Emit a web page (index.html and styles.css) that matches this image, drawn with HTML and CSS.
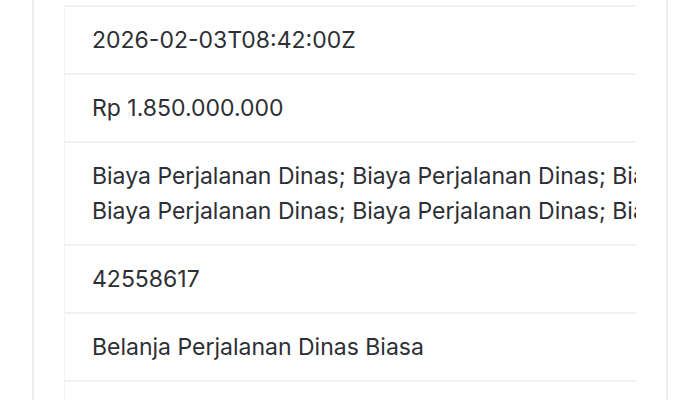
FILE: index.html
```html
<!DOCTYPE html>
<html lang="en">
<head>
  <meta charset="UTF-8" />
  <meta name="viewport" content="width=device-width, initial-scale=1.0"/>
  <title>Detail Transaksi</title>
  <link rel="stylesheet" href="styles.css">
</head>
<body>
  <div class="card">
    <div class="table-wrap">
      <table class="detail">
        <tr><td>2026-02-03T08:42:00Z</td></tr>
        <tr><td>Rp 1.850.000.000</td></tr>
        <tr><td>Biaya Perjalanan Dinas; Biaya Perjalanan Dinas; Biaya Perjalanan Dinas; Biaya Perjalanan Dinas;<br>Biaya Perjalanan Dinas; Biaya Perjalanan Dinas; Biaya Perjalanan Dinas; Biaya Perjalanan Dinas</td></tr>
        <tr><td>42558617</td></tr>
        <tr><td>Belanja Perjalanan Dinas Biasa</td></tr>
        <tr><td class="empty"></td></tr>
      </table>
    </div>
  </div>
</body>
</html>
```

FILE: styles.css
```css
body {
  margin: 0;
  background: #fff;
  font-family: Inter, 'Noto Sans', sans-serif;
  color: #2d2f35;
}
.card {
  margin: -61px 32px 0;
  border: 2px solid #ececec;
  border-radius: 10px;
  padding: 64px 30px 40px;
  background: #fff;
}
.table-wrap {
  overflow: hidden;
  border-left: 1px solid #f3f3f5;
}
.detail {
  border-collapse: collapse;
}
.detail td {
  border-bottom: 2px solid #f1f1f3;
  padding: 15.5px 28px 15.5px 27px;
  font-size: 23px;
  line-height: 35px;
  white-space: nowrap;
}
.detail tr:first-child td {
  border-top: 2px solid #f1f1f3;
}
.detail td.empty {
  height: 35px;
}
```
